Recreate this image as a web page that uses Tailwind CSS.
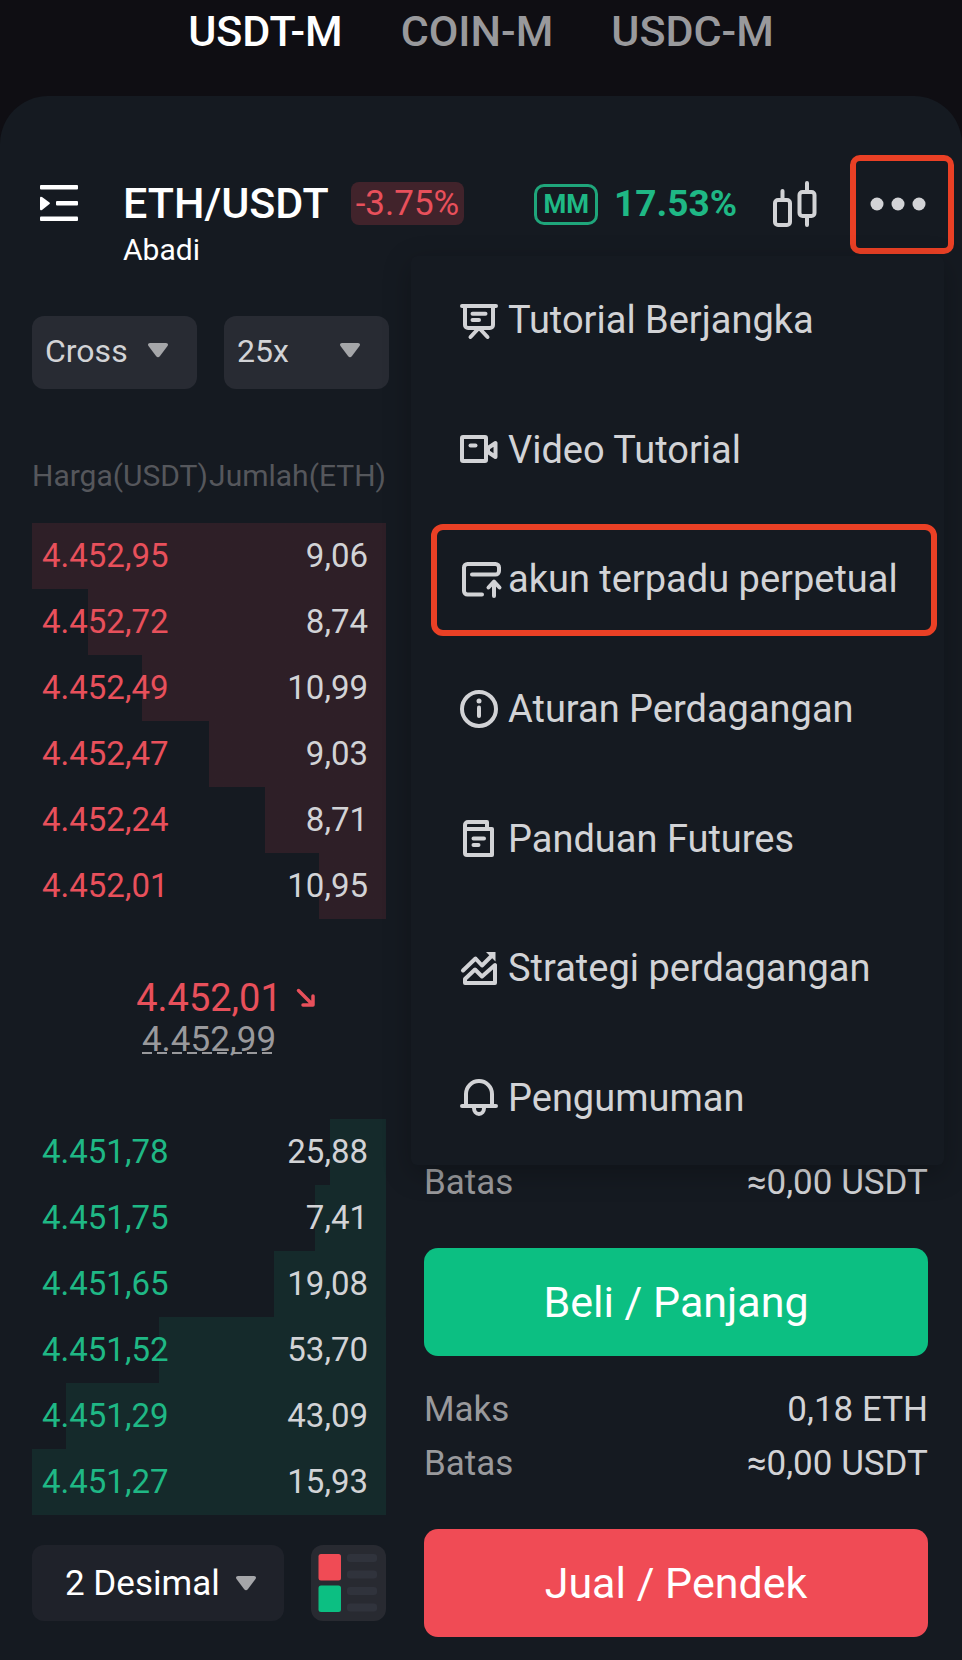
<!DOCTYPE html>
<html lang="id">
  <head>
    <title>ETH/USDT Futures</title>
    <meta charset="utf-8" />
    <meta name="viewport" content="width=device-width, initial-scale=1" />
    <script src="https://cdn.jsdelivr.net/npm/@tailwindcss/browser@4"></script>
  </head>
  <body class="bg-[#0f0e13] font-[Roboto,sans-serif] text-[#d2d3d6]">
    <!-- contract type tabs -->
    <nav class="flex h-24 justify-center gap-[58px] text-[43px] leading-[62px] font-medium text-[#99999c]">
      <a href="#" class="text-white">USDT-M</a>
      <a href="#">COIN-M</a>
      <a href="#">USDC-M</a>
    </nav>

    <main class="relative rounded-t-[48px] bg-[#151a21] pb-[23px]">
      <!-- pair header -->
      <header class="flex items-start pt-[82px] pr-2 pl-10">
        <button class="flex h-[50px] items-center text-white" aria-label="Menu">
          <svg width="38" height="36" viewBox="0 0 38 36" fill="currentColor">
            <rect width="38" height="4.5" rx="1" />
            <path d="M0 13q0-2 2-1l7.500 5.500q1 .8 0 1.600L2 25q-2 1-2-1z" />
            <rect x="16" y="16" width="22" height="4.500" rx="1" />
            <rect y="31.500" width="38" height="4.500" rx="1" />
          </svg>
        </button>
        <div class="ml-[45px] text-white">
          <div class="flex h-[50px] items-center gap-[22px]">
            <h1 class="text-[43px] leading-12 font-medium">ETH/USDT</h1>
            <span class="rounded-lg bg-[#41232b] px-[5px] text-[35px] leading-[43px] text-[#e8505b]">-3.75%</span>
          </div>
          <p class="text-[30px] leading-11">Abadi</p>
        </div>
        <div class="ml-auto flex h-[52px] items-center text-[#1fb885]">
          <span class="rounded-[10px] border-3 border-[#1fa67b] px-1.5 text-[26px] leading-[35px] font-bold">MM</span>
          <span class="ml-4 text-[37px] font-bold">17.53%</span>
          <button class="ml-9 text-[#d2d3d6]" aria-label="Grafik">
            <svg width="44" height="46" viewBox="0 0 44 46" fill="none" stroke="currentColor" stroke-width="4" stroke-linecap="round">
              <rect x="2" y="19" width="15" height="25" rx="3" />
              <path d="M9.500 10v8" />
              <rect x="26.500" y="11" width="15" height="24" rx="3" />
              <path d="M34 2v8M34 36v8" />
            </svg>
          </button>
          <button
            class="ml-[33px] flex h-[99px] w-[104px] items-center justify-center rounded-[10px] border-6 border-[#ea4025] pr-2 text-[#d2d3d6]"
            aria-label="Lainnya"
          >
            <svg width="56" height="14" viewBox="0 0 56 14" fill="currentColor">
              <circle cx="7" cy="7" r="6.500" />
              <circle cx="28" cy="7" r="6.500" />
              <circle cx="49" cy="7" r="6.500" />
            </svg>
          </button>
        </div>
      </header>

      <div class="mt-11 grid grid-cols-[354fr_504fr] gap-x-[38px] pr-[34px] pl-8">
        <!-- order book -->
        <section>
          <div class="-mr-[3px] grid grid-cols-2 gap-[27px] text-[32px]">
            <div class="relative">
              <select class="h-[73px] w-full appearance-none rounded-xl bg-[#282b33] pb-1 pl-[13px]" aria-label="Mode margin">
                <option>Cross</option>
                <option>Isolated</option>
              </select>
              <svg class="pointer-events-none absolute top-[27px] right-[29px] text-[#a5a6a9]" width="20" height="15" viewBox="0 0 20 15" fill="currentColor">
                <path d="M2 0h16q3 .5 1.500 3l-7.500 10q-2 2.500-4 0L.5 3Q-1 .5 2 0z" />
              </svg>
            </div>
            <div class="relative">
              <select class="h-[73px] w-full appearance-none rounded-xl bg-[#282b33] pb-1 pl-[13px]" aria-label="Leverage">
                <option>25x</option>
                <option>50x</option>
              </select>
              <svg class="pointer-events-none absolute top-[27px] right-[29px] text-[#a5a6a9]" width="20" height="15" viewBox="0 0 20 15" fill="currentColor">
                <path d="M2 0h16q3 .5 1.500 3l-7.500 10q-2 2.500-4 0L.5 3Q-1 .5 2 0z" />
              </svg>
            </div>
          </div>

          <table class="mt-10 w-full text-[33px] leading-[66px] whitespace-nowrap">
            <thead>
              <tr class="h-[94px] text-[30px] text-[#55575c]">
                <th class="p-0 text-left font-normal">Harga(USDT)</th>
                <th class="p-0 text-right font-normal">Jumlah(ETH)</th>
              </tr>
            </thead>
            <tbody class="text-[#e8505b]">
              <tr class="bg-linear-to-r from-[#2e1f27] to-[#2e1f27] bg-right bg-no-repeat" style="background-size: 100% 100%">
                <td class="py-0 pl-2.5">4.452,95</td>
                <td class="py-0 pr-[18px] text-right text-[#d2d3d6]">9,06</td>
              </tr>
              <tr class="bg-linear-to-r from-[#2e1f27] to-[#2e1f27] bg-right bg-no-repeat" style="background-size: 84.2% 100%">
                <td class="py-0 pl-2.5">4.452,72</td>
                <td class="py-0 pr-[18px] text-right text-[#d2d3d6]">8,74</td>
              </tr>
              <tr class="bg-linear-to-r from-[#2e1f27] to-[#2e1f27] bg-right bg-no-repeat" style="background-size: 69% 100%">
                <td class="py-0 pl-2.5">4.452,49</td>
                <td class="py-0 pr-[18px] text-right text-[#d2d3d6]">10,99</td>
              </tr>
              <tr class="bg-linear-to-r from-[#2e1f27] to-[#2e1f27] bg-right bg-no-repeat" style="background-size: 50% 100%">
                <td class="py-0 pl-2.5">4.452,47</td>
                <td class="py-0 pr-[18px] text-right text-[#d2d3d6]">9,03</td>
              </tr>
              <tr class="bg-linear-to-r from-[#2e1f27] to-[#2e1f27] bg-right bg-no-repeat" style="background-size: 34.3% 100%">
                <td class="py-0 pl-2.5">4.452,24</td>
                <td class="py-0 pr-[18px] text-right text-[#d2d3d6]">8,71</td>
              </tr>
              <tr class="bg-linear-to-r from-[#2e1f27] to-[#2e1f27] bg-right bg-no-repeat" style="background-size: 19% 100%">
                <td class="py-0 pl-2.5">4.452,01</td>
                <td class="py-0 pr-[18px] text-right text-[#d2d3d6]">10,95</td>
              </tr>
            </tbody>
            <!-- last price and mark price -->
            <tbody>
              <tr class="h-[200px]">
                <td colspan="2" class="p-0 text-center leading-[42px]">
                  <div class="text-[38px] text-[#e8505b]">
                    <span class="relative">
                      4.452,01
                      <svg class="absolute top-3 left-full ml-3.5" width="20" height="20" viewBox="0 0 20 20" fill="none" stroke="currentColor" stroke-width="3.500" stroke-linecap="round" stroke-linejoin="round">
                        <path d="M2.500 2.500l14 14M17 8v9H7" />
                      </svg>
                    </span>
                  </div>
                  <div class="text-[35px] text-[#99999c]">
                    <span
                      class="inline-block bg-[repeating-linear-gradient(to_right,#99999c_0_10px,transparent_10px_15px)] bg-[length:100%_2px] bg-[position:0_33px] bg-no-repeat"
                      >4.452,99</span
                    >
                  </div>
                </td>
              </tr>
            </tbody>
            <tbody class="text-[#1fb885]">
              <tr class="bg-linear-to-r from-[#152a2b] to-[#152a2b] bg-right bg-no-repeat" style="background-size: 15.8% 100%">
                <td class="py-0 pl-2.5">4.451,78</td>
                <td class="py-0 pr-[18px] text-right text-[#d2d3d6]">25,88</td>
              </tr>
              <tr class="bg-linear-to-r from-[#152a2b] to-[#152a2b] bg-right bg-no-repeat" style="background-size: 20.2% 100%">
                <td class="py-0 pl-2.5">4.451,75</td>
                <td class="py-0 pr-[18px] text-right text-[#d2d3d6]">7,41</td>
              </tr>
              <tr class="bg-linear-to-r from-[#152a2b] to-[#152a2b] bg-right bg-no-repeat" style="background-size: 31.6% 100%">
                <td class="py-0 pl-2.5">4.451,65</td>
                <td class="py-0 pr-[18px] text-right text-[#d2d3d6]">19,08</td>
              </tr>
              <tr class="bg-linear-to-r from-[#152a2b] to-[#152a2b] bg-right bg-no-repeat" style="background-size: 64.2% 100%">
                <td class="py-0 pl-2.5">4.451,52</td>
                <td class="py-0 pr-[18px] text-right text-[#d2d3d6]">53,70</td>
              </tr>
              <tr class="bg-linear-to-r from-[#152a2b] to-[#152a2b] bg-right bg-no-repeat" style="background-size: 90.3% 100%">
                <td class="py-0 pl-2.5">4.451,29</td>
                <td class="py-0 pr-[18px] text-right text-[#d2d3d6]">43,09</td>
              </tr>
              <tr class="bg-linear-to-r from-[#152a2b] to-[#152a2b] bg-right bg-no-repeat" style="background-size: 100% 100%">
                <td class="py-0 pl-2.5">4.451,27</td>
                <td class="py-0 pr-[18px] text-right text-[#d2d3d6]">15,93</td>
              </tr>
            </tbody>
          </table>

          <div class="mt-[30px] mb-4 flex gap-[27px]">
            <div class="relative flex-1">
              <select class="h-[76px] w-full appearance-none rounded-xl bg-[#1f222a] pt-0.5 pl-[33px] text-[35px] text-white" aria-label="Presisi">
                <option>2 Desimal</option>
                <option>1 Desimal</option>
              </select>
              <svg class="pointer-events-none absolute top-[31px] right-7 text-[#a5a6a9]" width="20" height="15" viewBox="0 0 20 15" fill="currentColor">
                <path d="M2 0h16q3 .5 1.500 3l-7.500 10q-2 2.500-4 0L.5 3Q-1 .5 2 0z" />
              </svg>
            </div>
            <button class="h-[76px] w-[75px] rounded-xl bg-[#282a31]" aria-label="Tampilan buku pesanan">
              <svg width="75" height="76" viewBox="0 0 75 76">
                <rect x="7.500" y="9" width="22.500" height="26.500" rx="2.500" fill="#f04b55" />
                <rect x="7.500" y="40.500" width="22.500" height="26.500" rx="2.500" fill="#0cbf82" />
                <g fill="#30333c">
                  <rect x="36" y="9" width="30" height="8" rx="3" />
                  <rect x="36" y="25.500" width="30" height="8" rx="3" />
                  <rect x="36" y="42" width="30" height="8" rx="3" />
                  <rect x="36" y="58.500" width="30" height="8" rx="3" />
                </g>
              </svg>
            </button>
          </div>
        </section>

        <!-- order form -->
        <section class="flex flex-col justify-end text-[35px] leading-[54px]">
          <dl class="flex justify-between">
            <dt class="text-[#99999c]">Batas</dt>
            <dd>≈0,00 USDT</dd>
          </dl>
          <button class="mt-[38px] h-[108px] rounded-[14px] bg-[#0cbf82] text-[43px] text-white">Beli / Panjang</button>
          <dl class="mt-[27px] grid grid-cols-[auto_1fr]">
            <dt class="text-[#99999c]">Maks</dt>
            <dd class="text-right">0,18 ETH</dd>
            <dt class="text-[#99999c]">Batas</dt>
            <dd class="text-right">≈0,00 USDT</dd>
          </dl>
          <button class="mt-[38px] h-[108px] rounded-[14px] bg-[#f04b55] text-[43px] text-white">Jual / Pendek</button>
        </section>
      </div>

      <!-- dropdown menu -->
      <ul
        class="absolute top-40 right-[18px] grid h-[909px] w-[533px] auto-rows-fr items-center rounded-md bg-[#151a21] pb-0.5 text-[38px] whitespace-nowrap shadow-[0_8px_28px_rgba(0,0,0,0.25)]"
      >
        <li>
          <a href="#" class="flex items-center gap-2.5 pl-[49px]">
            <svg width="38" height="38" viewBox="0 0 38 38" fill="none" stroke="currentColor" stroke-width="4" stroke-linecap="round" stroke-linejoin="round">
              <path d="M2 4h34M5 4v19a3 3 0 0 0 3 3h22a3 3 0 0 0 3-3V4M17 28l-6.500 7M21 28l6.500 7" />
              <path d="M12.500 11.700h13M12.500 18h6.500" />
            </svg>
            Tutorial Berjangka
          </a>
        </li>
        <li>
          <a href="#" class="flex items-center gap-2.5 pl-[49px]">
            <svg width="38" height="38" viewBox="0 0 38 38" fill="none" stroke="currentColor" stroke-width="4" stroke-linecap="round" stroke-linejoin="round">
              <rect x="2" y="6" width="24" height="24" rx="1" />
              <path d="M10.500 14.500h5" />
              <path d="M28 17l7.500-5v14L28 21z" stroke-width="4" />
            </svg>
            Video Tutorial
          </a>
        </li>
        <li>
          <a href="#" class="mr-[7px] ml-5 flex h-28 items-center gap-2.5 rounded-xl border-6 border-[#ea4025] pl-[23px]">
            <svg class="overflow-visible" width="38" height="38" viewBox="0 0 38 38" fill="none" stroke="currentColor" stroke-width="4" stroke-linecap="round" stroke-linejoin="round">
              <path d="M22 33.500H7.500a3.500 3.500 0 0 1-3.500-3.500V6.500A3.500 3.500 0 0 1 7.500 3h28A3.500 3.500 0 0 1 39 6.500V10a3.500 3.500 0 0 1-3.500 3.500H12" />
              <path d="M34 21v14M28.500 26.500l5.500-6 5.500 6" />
            </svg>
            akun terpadu perpetual
          </a>
        </li>
        <li>
          <a href="#" class="flex items-center gap-2.5 pl-[49px]">
            <svg width="38" height="38" viewBox="0 0 38 38" fill="none" stroke="currentColor" stroke-width="4" stroke-linecap="round">
              <circle cx="19" cy="19" r="17" />
              <path d="M19 17.500v8.500" />
              <circle cx="19" cy="11" r="2.500" fill="currentColor" stroke="none" />
            </svg>
            Aturan Perdagangan
          </a>
        </li>
        <li>
          <a href="#" class="flex items-center gap-2.5 pl-[49px]">
            <svg width="38" height="38" viewBox="0 0 38 38" fill="none" stroke="currentColor" stroke-width="4" stroke-linecap="round" stroke-linejoin="round">
              <path d="M5 9V5a3 3 0 0 1 3-3h19v6" />
              <path d="M5 9h27v26H7a2 2 0 0 1-2-2z" />
              <path d="M13.500 18.500h10.500M13.500 25h5" />
            </svg>
            Panduan Futures
          </a>
        </li>
        <li>
          <a href="#" class="flex items-center gap-2.5 pl-[49px]">
            <svg width="38" height="38" viewBox="0 0 38 38" fill="none" stroke="currentColor" stroke-width="4" stroke-linecap="round" stroke-linejoin="round">
              <path d="M3 20.500l12.500-12 6.500 7L32 5.500" />
              <path d="M26 2h9.500v9.500z" fill="currentColor" stroke="none" />
              <path d="M5 33v-4l10-9.500 7 7 13-11.500v18z" />
            </svg>
            Strategi perdagangan
          </a>
        </li>
        <li>
          <a href="#" class="flex items-center gap-2.5 pl-[49px]">
            <svg width="38" height="38" viewBox="0 0 38 38" fill="none" stroke="currentColor" stroke-width="4" stroke-linecap="round">
              <path d="M2 27h34M6 26V15a13 13 0 0 1 26 0v11" />
              <path d="M14 29a5 6 0 0 0 10 0" />
            </svg>
            Pengumuman
          </a>
        </li>
      </ul>
    </main>
  </body>
</html>
